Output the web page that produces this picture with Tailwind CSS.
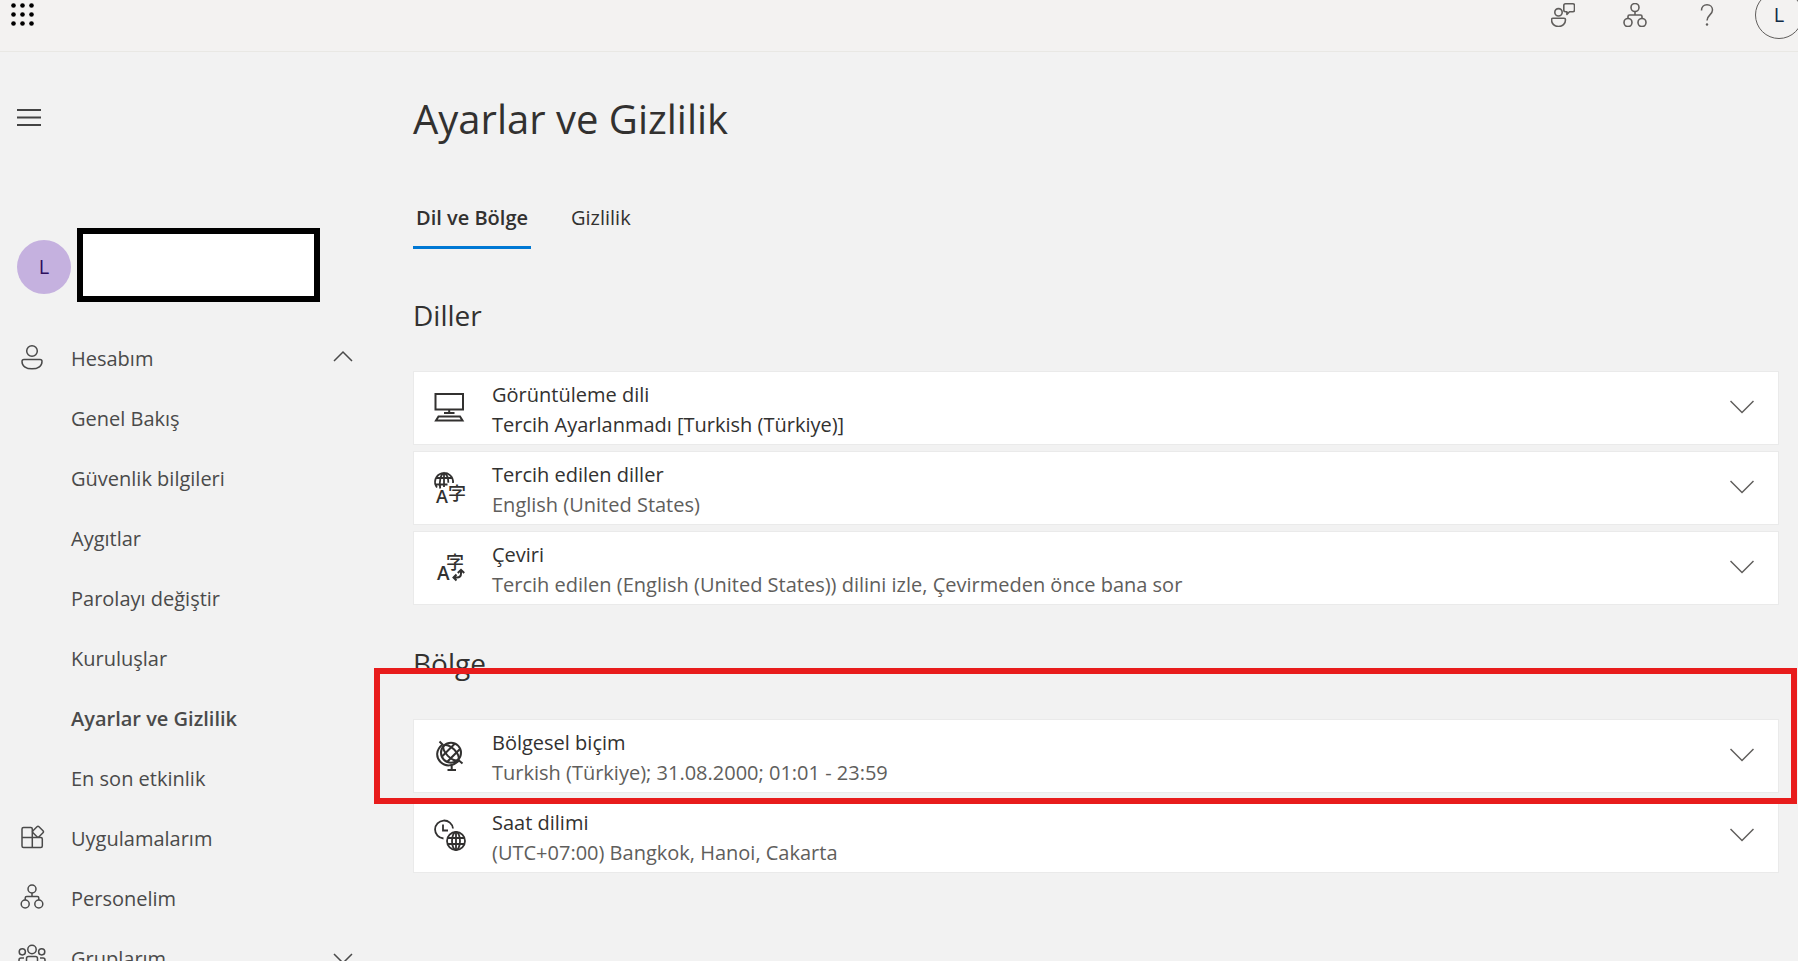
<!DOCTYPE html>
<html lang="tr">
<head>
  <meta charset="UTF-8">
  <meta name="viewport" content="width=device-width, initial-scale=1">
  <title>Ayarlar ve Gizlilik</title>
  <script src="https://cdn.jsdelivr.net/npm/@tailwindcss/browser@4"></script>
</head>
<body class="h-screen overflow-hidden bg-[#f2f2f2] font-['Open_Sans','Noto_Sans',sans-serif] text-[20px] leading-[30px] text-[#323130]">

  <!-- Header -->
  <header class="h-[52px] bg-[#f3f2f1] border-b border-[#e9e8e4]">
    <div class="h-[30px] flex items-center justify-between pl-[11px]">
      <button type="button" aria-label="Uygulama başlatıcı">
        <svg class="w-6 h-6" viewBox="0 0 24 24" fill="#000">
          <circle cx="2.5" cy="2.5" r="2.3"/><circle cx="11.5" cy="2.5" r="2.3"/><circle cx="20.5" cy="2.5" r="2.3"/>
          <circle cx="2.5" cy="11.5" r="2.3"/><circle cx="11.5" cy="11.5" r="2.3"/><circle cx="20.5" cy="11.5" r="2.3"/>
          <circle cx="2.5" cy="20.5" r="2.3"/><circle cx="11.5" cy="20.5" r="2.3"/><circle cx="20.5" cy="20.5" r="2.3"/>
        </svg>
      </button>
      <div class="flex items-center gap-12 -mr-[5px] text-[#605e5c]">
        <button type="button" aria-label="Geri bildirim">
          <svg class="w-6 h-6" viewBox="0 0 24 24" fill="none" stroke="currentColor" stroke-width="1.6" stroke-linejoin="round">
            <circle cx="7.5" cy="9.3" r="3.7"/>
            <path d="M2 15.3h11q1.5 0 1.5 1.5c0 4-3 6.7-7 6.7s-7-2.7-7-6.7q0-1.5 1.5-1.5z"/>
            <path d="M14.5.8h7.3q1.7 0 1.7 1.7v4.500q0 1.700-1.700 1.700h-3.300l-2.600 2.800v-2.800h-1.400q-1.700 0-1.700-1.700V2.500q0-1.700 1.700-1.700z"/>
          </svg>
        </button>
        <button type="button" aria-label="Kuruluş">
          <svg class="w-6 h-6" viewBox="0 0 24 24" fill="none" stroke="currentColor" stroke-width="1.6">
            <circle cx="12" cy="4.5" r="4"/><circle cx="5" cy="19.5" r="4"/><circle cx="19" cy="19.5" r="4"/>
            <path d="M12 8.5V12M5 15.5V13.5q0-1.5 1.5-1.5h11q1.5 0 1.5 1.5v2"/>
          </svg>
        </button>
        <button type="button" aria-label="Yardım">
          <svg class="w-6 h-6" viewBox="0 0 24 24" fill="none" stroke="currentColor" stroke-width="1.5">
            <path d="M6.500 7.500c0-3.500 2.300-5.700 5.500-5.700s5.500 2.100 5.500 5.200c0 4.800-5.500 5-5.500 10.500"/>
            <circle cx="12" cy="21.500" r="1.200" fill="currentColor" stroke="none"/>
          </svg>
        </button>
        <button type="button" aria-label="Hesap yöneticisi" class="size-12 shrink-0 -ml-3 rounded-full border border-[#605e5c] text-[#0f2b46]">L</button>
      </div>
    </div>
  </header>

  <div class="flex">

    <!-- Sidebar -->
    <aside class="w-[370px] shrink-0 text-[#4a4a4a]">
      <button type="button" aria-label="Menü" class="block mt-[54px] ml-[17px]">
        <svg class="w-6 h-6" viewBox="0 0 24 24" stroke="#444" stroke-width="2">
          <path d="M0 4h24M0 11.500h24M0 19h24"/>
        </svg>
      </button>

      <div class="flex items-end gap-[6px] mt-[98px] ml-[17px]">
        <div class="size-[54px] mb-2 rounded-full bg-[#c5b1df] text-[#2d0f5e] flex items-center justify-center">L</div>
        <div class="w-[243px] h-[74px] bg-white border-[6px] border-black"></div>
      </div>

      <nav class="mt-[27px]">
        <button type="button" class="w-full h-[60px] flex items-center pl-[18px] pr-[17px]">
          <svg class="w-7 h-7 mr-[25px] mb-[2px]" viewBox="-2 -2 28 28" fill="none" stroke="currentColor" stroke-width="1.5">
            <circle cx="12" cy="5" r="5.3"/>
            <path d="M4 13.500h16q2 0 2 2c0 5-4.500 7.300-10 7.300S2 20.500 2 15.500q0-2 2-2z"/>
          </svg>
          Hesabım
          <svg class="w-5 h-5 ml-auto mb-[2px]" viewBox="0 0 20 20" fill="none" stroke="currentColor" stroke-width="1.5"><path d="M1 13l9-9 9 9"/></svg>
        </button>
        <a href="#" class="h-[60px] flex items-center pl-[71px]">Genel Bakış</a>
        <a href="#" class="h-[60px] flex items-center pl-[71px]">Güvenlik bilgileri</a>
        <a href="#" class="h-[60px] flex items-center pl-[71px]">Aygıtlar</a>
        <a href="#" class="h-[60px] flex items-center pl-[71px]">Parolayı değiştir</a>
        <a href="#" class="h-[60px] flex items-center pl-[71px]">Kuruluşlar</a>
        <a href="#" aria-current="page" class="h-[60px] flex items-center pl-[71px] font-semibold">Ayarlar ve Gizlilik</a>
        <a href="#" class="h-[60px] flex items-center pl-[71px]">En son etkinlik</a>
        <a href="#" class="h-[60px] flex items-center pl-[18px]">
          <svg class="w-7 h-7 mr-[25px] mb-[2px]" viewBox="-2 -1 28 28" fill="none" stroke="currentColor" stroke-width="1.5" stroke-linejoin="round">
            <path d="M12.300 12.500V4q0-1.500-1.500-1.500H3.500Q2 2.500 2 4v17q0 1.500 1.500 1.500h17.300q1.500 0 1.500-1.500v-7q0-1.500-1.500-1.500H2M12.300 12.500v10"/>
            <path d="M17 1.700q1-1 2 0l4 4q1 1 0 2l-4 4q-1 1-2 0l-4-4q-1-1 0-2z"/>
          </svg>
          Uygulamalarım
        </a>
        <a href="#" class="h-[60px] flex items-center pl-[18px]">
          <svg class="w-7 h-7 mr-[25px] mb-[2px]" viewBox="-2 -1 28 28" fill="none" stroke="currentColor" stroke-width="1.5">
            <circle cx="12" cy="4" r="4"/><circle cx="5.200" cy="19" r="4"/><circle cx="18.800" cy="19" r="4"/>
            <path d="M12 8v3.500M5.200 15v-2q0-1.500 1.500-1.500h10.600q1.500 0 1.500 1.500v2"/>
          </svg>
          Personelim
        </a>
        <button type="button" class="w-full h-[60px] flex items-center pl-[18px] pr-[17px]">
          <svg class="w-7 h-7 mr-[25px] mb-[2px]" viewBox="0 0 28 28" fill="none" stroke="currentColor" stroke-width="1.5">
            <circle cx="14" cy="5.500" r="4.200"/><circle cx="4.300" cy="7.800" r="3.100"/><circle cx="23.700" cy="7.800" r="3.100"/>
            <path d="M8.500 20v-5.500q0-2 2-2h7q2 0 2 2V20c0 7-11 7-11 0zM6 14H3q-2 0-2 2v3c0 3 2 4.500 5 4.500M22 14h3q2 0 2 2v3c0 3-2 4.500-5 4.500"/>
          </svg>
          Gruplarım
          <svg class="w-5 h-5 ml-auto mb-[2px]" viewBox="0 0 20 20" fill="none" stroke="currentColor" stroke-width="1.5"><path d="M1 6l9 9 9-9"/></svg>
        </button>
      </nav>
    </aside>

    <!-- Content -->
    <main class="flex-1 min-w-0 pl-[43px] pr-[19px] pt-10">
      <h1 class="text-[40px] leading-[54px]">Ayarlar ve Gizlilik</h1>

      <div role="tablist" class="flex gap-[38px] mt-[56px]">
        <button type="button" role="tab" aria-selected="true" class="h-[47px] pb-3 px-[3px] border-b-[3px] border-[#0078d4] font-semibold">Dil ve Bölge</button>
        <button type="button" role="tab" aria-selected="false" class="h-[47px] pb-3 px-[2px] border-b-[3px] border-transparent">Gizlilik</button>
      </div>

      <section class="mt-[46px]">
        <h2 class="text-[28px] leading-[40px]">Diller</h2>
        <div class="flex flex-col gap-[6px] mt-9">
          <button type="button" class="flex items-center text-left bg-white border border-[#eaeaea] py-1 pl-[19px] pr-6">
            <svg class="w-8 h-8 mr-[27px] shrink-0" viewBox="0 0 32 32" fill="none" stroke="currentColor" stroke-width="2">
              <path d="M2.500 2H30v15.500H2.500zM16.200 17.500v4M11 21h10.500M5.500 24.500h21.500l2.500 4H3z"/>
            </svg>
            <span class="pt-1">
              <span class="block">Görüntüleme dili</span>
              <span class="block">Tercih Ayarlanmadı [Turkish (Türkiye)]</span>
            </span>
            <svg class="w-6 h-6 ml-auto shrink-0 text-[#605e5c]" viewBox="0 0 24 24" fill="none" stroke="currentColor" stroke-width="1.5"><path d="M.5 5L12 16.500 23.500 5"/></svg>
          </button>
          <button type="button" class="flex items-center text-left bg-white border border-[#eaeaea] py-1 pl-[19px] pr-6">
            <svg class="w-8 h-8 mr-[27px] shrink-0 overflow-visible" viewBox="0 0 32 32" fill="none" stroke="currentColor" stroke-width="1.8">
              <path d="M4 15.500A9 9 0 1 1 20 11M7.200 16.500C6 10 7.500 2 11 .8c2.800 1.200 4.300 5 4.300 10M11 .8V15M2.800 6h16.400M2.500 12.500h12"/>
              <text x="3" y="31" font-family="Open Sans, sans-serif" font-size="18" font-weight="600" fill="currentColor" stroke="none">A</text>
              <text x="15" y="28" font-family="Noto Sans CJK JP, sans-serif" font-size="18" font-weight="500" fill="currentColor" stroke="none">字</text>
            </svg>
            <span class="pt-1">
              <span class="block">Tercih edilen diller</span>
              <span class="block text-[#605e5c]">English (United States)</span>
            </span>
            <svg class="w-6 h-6 ml-auto shrink-0 text-[#605e5c]" viewBox="0 0 24 24" fill="none" stroke="currentColor" stroke-width="1.5"><path d="M.5 5L12 16.500 23.500 5"/></svg>
          </button>
          <button type="button" class="flex items-center text-left bg-white border border-[#eaeaea] py-1 pl-[19px] pr-6">
            <svg class="w-8 h-8 mr-[27px] shrink-0 overflow-visible" viewBox="0 0 32 32" fill="none" stroke="currentColor" stroke-width="2">
              <text x="4" y="28" font-family="Open Sans, sans-serif" font-size="19" font-weight="600" fill="currentColor" stroke="none">A</text>
              <text x="13" y="17" font-family="Noto Sans CJK JP, sans-serif" font-size="18" font-weight="500" fill="currentColor" stroke="none">字</text>
              <path d="M28 18v3.500q0 4-4 4h-3M24.800 21l3.200-3.200 3.200 3.200M23.500 22.500l-3 3 3 3"/>
            </svg>
            <span class="pt-1">
              <span class="block">Çeviri</span>
              <span class="block text-[#605e5c]">Tercih edilen (English (United States)) dilini izle, Çevirmeden önce bana sor</span>
            </span>
            <svg class="w-6 h-6 ml-auto shrink-0 text-[#605e5c]" viewBox="0 0 24 24" fill="none" stroke="currentColor" stroke-width="1.5"><path d="M.5 5L12 16.500 23.500 5"/></svg>
          </button>
        </div>
      </section>

      <section class="relative mt-[38px]">
        <h2 class="text-[28px] leading-[40px]">Bölge</h2>
        <div class="flex flex-col gap-[6px] mt-9">
          <button type="button" class="flex items-center text-left bg-white border border-[#eaeaea] py-1 pl-[19px] pr-6">
            <svg class="w-8 h-8 mr-[27px] shrink-0" viewBox="0 0 32 32" fill="none" stroke="currentColor" stroke-width="2">
              <g transform="rotate(-45 18 12.7)">
                <circle cx="18" cy="12.700" r="10"/>
                <ellipse cx="18" cy="12.700" rx="4.500" ry="10"/>
                <path d="M9 9h18M9 16.400h18"/>
              </g>
              <path d="M6.500 1.500l3 3C2.500 10 3 17.500 7.500 22s12 5 18.500-1.500l3.500 3M18.700 25.500v4.500M14.500 30h8.500"/>
            </svg>
            <span class="pt-1">
              <span class="block">Bölgesel biçim</span>
              <span class="block text-[#605e5c]">Turkish (Türkiye); 31.08.2000; 01:01 - 23:59</span>
            </span>
            <svg class="w-6 h-6 ml-auto shrink-0 text-[#605e5c]" viewBox="0 0 24 24" fill="none" stroke="currentColor" stroke-width="1.5"><path d="M.5 5L12 16.500 23.500 5"/></svg>
          </button>
          <button type="button" class="flex items-center text-left bg-white border border-[#eaeaea] py-1 pl-[19px] pr-6">
            <svg class="w-8 h-8 mr-[27px] shrink-0 overflow-visible" viewBox="0 0 32 32" fill="none" stroke="currentColor" stroke-width="1.8">
              <path d="M10.500 18.500A9 9 0 1 1 20 8.500M10 4.500v6h5"/>
              <circle cx="23" cy="21" r="9"/>
              <ellipse cx="23" cy="21" rx="4" ry="9"/>
              <path d="M23 12v18M14.700 18h16.600M14.700 24h16.600"/>
            </svg>
            <span class="pt-1">
              <span class="block">Saat dilimi</span>
              <span class="block text-[#605e5c]">(UTC+07:00) Bangkok, Hanoi, Cakarta</span>
            </span>
            <svg class="w-6 h-6 ml-auto shrink-0 text-[#605e5c]" viewBox="0 0 24 24" fill="none" stroke="currentColor" stroke-width="1.5"><path d="M.5 5L12 16.500 23.500 5"/></svg>
          </button>
        </div>
        <!-- Highlight around the regional format card -->
        <div class="absolute top-[25px] -left-[39px] -right-[18px] h-[136px] border-[6px] border-[#e81c1c] pointer-events-none"></div>
      </section>
    </main>

  </div>
</body>
</html>
